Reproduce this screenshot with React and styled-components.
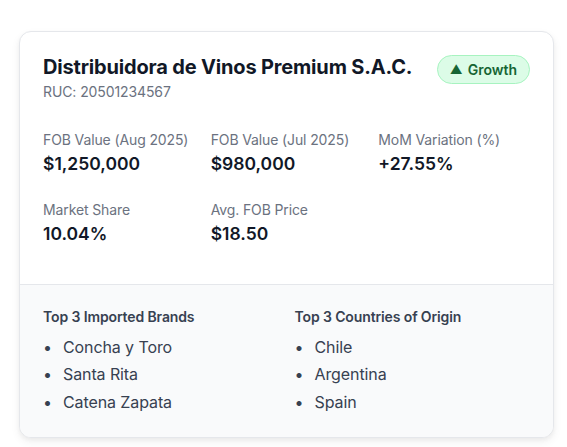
import React from "react";
import styled, { createGlobalStyle } from "styled-components";

const GlobalStyle = createGlobalStyle`
  html, body { margin: 0; padding: 0; background: #ffffff; }
  body { font-family: Inter, "Noto Sans", "Liberation Sans", sans-serif; -webkit-font-smoothing: antialiased; }
  * { box-sizing: border-box; }
`;

const Page = styled.div`
  padding: 31px 13px 9px 19px;
`;

const Card = styled.div`
  width: 535px;
  background: #ffffff;
  border: 1px solid #e5e7eb;
  border-radius: 12px;
  box-shadow: 0 4px 10px rgba(0, 0, 0, 0.06), 0 2px 4px rgba(0, 0, 0, 0.04);
  overflow: hidden;
`;

const Top = styled.div`
  padding: 21px 23px 36px 23px;
  border-bottom: 1px solid #e5e7eb;
`;

const Header = styled.div`
  display: flex;
  justify-content: space-between;
  align-items: flex-start;
  margin-bottom: 28px;
`;

const TitleBlock = styled.div`
  display: flex;
  flex-direction: column;
`;

const Title = styled.h2`
  margin: 0;
  font-size: 20px;
  line-height: 28px;
  font-weight: 700;
  letter-spacing: -0.17px;
  color: #111827;
`;

const Sub = styled.div`
  margin-top: 1px;
  font-size: 14px;
  line-height: 20px;
  letter-spacing: -0.1px;
  color: #6b7280;
`;

const Badge = styled.span`
  margin-top: 2px;
  display: inline-flex;
  align-items: center;
  gap: 5px;
  padding: 4px 12px;
  border-radius: 999px;
  background: #dcfce7;
  border: 1px solid #a7f3c0;
  color: #166534;
  font-size: 14px;
  line-height: 19px;
  font-weight: 600;
`;

const Arrow = styled.span`
  font-size: 12.5px;
`;

const MetricsGrid = styled.div`
  display: grid;
  grid-template-columns: repeat(3, 1fr);
  column-gap: 16px;
  row-gap: 22px;
`;

const Metric = styled.div`
  display: flex;
  flex-direction: column;
`;

const Label = styled.div`
  font-size: 14px;
  line-height: 20px;
  letter-spacing: -0.12px;
  color: #6b7280;
`;

const Value = styled.div`
  font-size: 17.5px;
  line-height: 28px;
  font-weight: 600;
  color: #111827;
`;

const Bottom = styled.div`
  background: #f9fafb;
  padding: 22px 23px 23px 23px;
  display: grid;
  grid-template-columns: 1fr 1fr;
  column-gap: 16px;
`;

const ListHeading = styled.div`
  font-size: 14px;
  line-height: 20px;
  font-weight: 600;
  letter-spacing: -0.12px;
  color: #374151;
  margin-bottom: 7.5px;
`;

const List = styled.ul`
  list-style: none;
  margin: 0;
  padding: 0;
  display: flex;
  flex-direction: column;
  gap: 3.5px;
`;

const Item = styled.li`
  display: flex;
  font-size: 16px;
  line-height: 24px;
  letter-spacing: -0.1px;
  color: #374151;
  &::before {
    content: "•";
    width: 20px;
    flex: none;
    color: #374151;
  }
`;

const metrics = [
  { label: "FOB Value (Aug 2025)", value: "$1,250,000" },
  { label: "FOB Value (Jul 2025)", value: "$980,000" },
  { label: "MoM Variation (%)", value: "+27.55%" },
  { label: "Market Share", value: "10.04%" },
  { label: "Avg. FOB Price", value: "$18.50" },
];

const lists = [
  { title: "Top 3 Imported Brands", items: ["Concha y Toro", "Santa Rita", "Catena Zapata"] },
  { title: "Top 3 Countries of Origin", items: ["Chile", "Argentina", "Spain"] },
];

export default function App() {
  return (
    <>
      <GlobalStyle />
      <Page>
        <Card>
          <Top>
            <Header>
              <TitleBlock>
                <Title>Distribuidora de Vinos Premium S.A.C.</Title>
                <Sub>RUC: 20501234567</Sub>
              </TitleBlock>
              <Badge>
                <Arrow>▲</Arrow>
                Growth
              </Badge>
            </Header>
            <MetricsGrid>
              {metrics.map((m) => (
                <Metric key={m.label}>
                  <Label>{m.label}</Label>
                  <Value>{m.value}</Value>
                </Metric>
              ))}
            </MetricsGrid>
          </Top>
          <Bottom>
            {lists.map((l) => (
              <div key={l.title}>
                <ListHeading>{l.title}</ListHeading>
                <List>
                  {l.items.map((it) => (
                    <Item key={it}>{it}</Item>
                  ))}
                </List>
              </div>
            ))}
          </Bottom>
        </Card>
      </Page>
    </>
  );
}
